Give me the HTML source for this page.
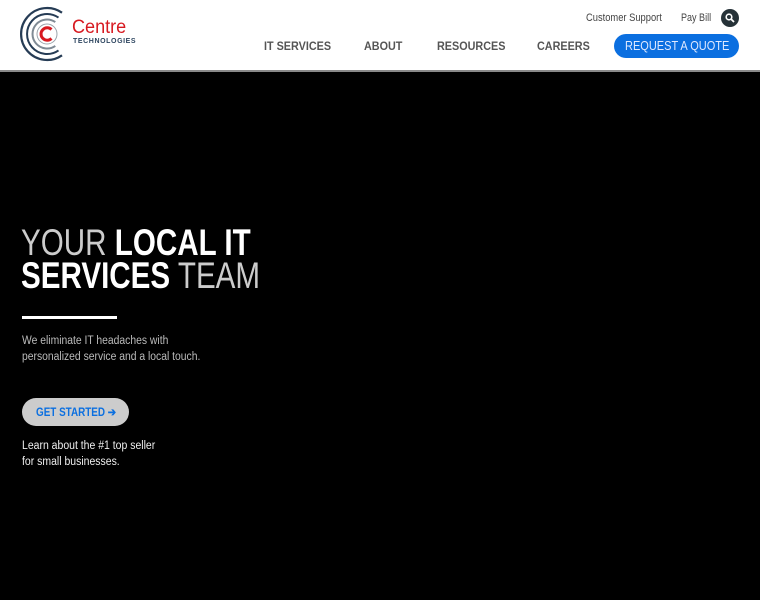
<!DOCTYPE html>
<html><head><style>
*{margin:0;padding:0;box-sizing:border-box}
body{width:760px;height:600px;background:#000;font-family:"Liberation Sans",sans-serif;overflow:hidden;position:relative}
.hdr{position:absolute;left:0;top:0;width:760px;height:72px;background:#fff;border-bottom:2px solid #8a8a8a}
.t{position:absolute;white-space:nowrap;transform-origin:left top}
.nav{font-size:12px;font-weight:bold;color:#555;top:39px;transform:scaleX(.9)}
</style></head><body>
<div class="hdr">
<svg class="t" style="left:18px;top:5px" width="60" height="58" viewBox="0 0 60 58">
<path d="M44 7.7 A26 26 0 1 0 44 50.3" fill="none" stroke="#263c55" stroke-width="2.2"/>
<path d="M40.5 12.6 A20 20 0 1 0 40.5 45.4" fill="none" stroke="#263c55" stroke-width="2"/>
<path d="M37.3 17.1 A14.5 14.5 0 1 0 37.3 40.9" fill="none" stroke="#7f8a94" stroke-width="2"/>
<circle cx="29" cy="29" r="10" fill="#fff" stroke="#9aa3ab" stroke-width="1"/>
<path d="M33.5 24.5 A6.2 6.2 0 1 0 33.5 33.5" fill="none" stroke="#d71920" stroke-width="3"/>
</svg>
<div class="t" style="left:72px;top:17px;font-size:19px;color:#d71920;transform:scaleX(.95)">Centre</div>
<div class="t" style="left:73px;top:38px;font-size:7px;font-weight:bold;color:#2e4660;letter-spacing:.6px">TECHNOLOGIES</div>
<div class="t" style="left:586px;top:12px;font-size:11px;color:#444;transform:scaleX(.85)">Customer Support</div>
<div class="t" style="left:681px;top:12px;font-size:11px;color:#444;transform:scaleX(.82)">Pay Bill</div>
<div class="t" style="left:721px;top:9px;width:18px;height:18px;border-radius:50%;background:#263238"></div>
<svg class="t" style="left:725px;top:13px" width="10" height="10" viewBox="0 0 10 10"><circle cx="4" cy="4" r="2.8" fill="none" stroke="#fff" stroke-width="1.6"/><path d="M6 6 L9 9" stroke="#fff" stroke-width="1.8"/></svg>
<div class="t nav" style="left:264px">IT SERVICES</div>
<div class="t nav" style="left:364px">ABOUT</div>
<div class="t nav" style="left:437px">RESOURCES</div>
<div class="t nav" style="left:537px">CAREERS</div>
<div class="t" style="left:614px;top:34px;width:125px;height:24px;border-radius:12px;background:#0b6fe0"></div>
<div class="t" style="left:625px;top:39px;font-size:12.5px;color:#dfe9ff;transform:scaleX(.88)">REQUEST A QUOTE</div>
</div>
<div class="t" style="left:21px;top:226px;font-size:37px;line-height:33px;color:#fff;transform:scaleX(.8)"><span style="color:#ccc">YOUR</span> <b>LOCAL IT</b><br><b>SERVICES</b> <span style="color:#ccc">TEAM</span></div>
<div class="t" style="left:22px;top:316px;width:95px;height:3px;background:#fff"></div>
<div class="t" style="left:22px;top:333px;font-size:11.5px;line-height:16px;color:#bbb;transform:scaleX(.9)">We eliminate IT headaches with<br>personalized service and a local touch.</div>
<div class="t" style="left:22px;top:398px;width:107px;height:28px;border-radius:14px;background:#ccc"></div>
<div class="t" style="left:36px;top:405px;color:#0b6fe0;font-size:11.5px;font-weight:bold;transform:scaleX(.86)">GET STARTED ➔</div>
<div class="t" style="left:22px;top:438px;font-size:11.5px;line-height:16px;color:#eee;transform:scaleX(.91)">Learn about the #1 top seller<br>for small businesses.</div>
</body></html>
